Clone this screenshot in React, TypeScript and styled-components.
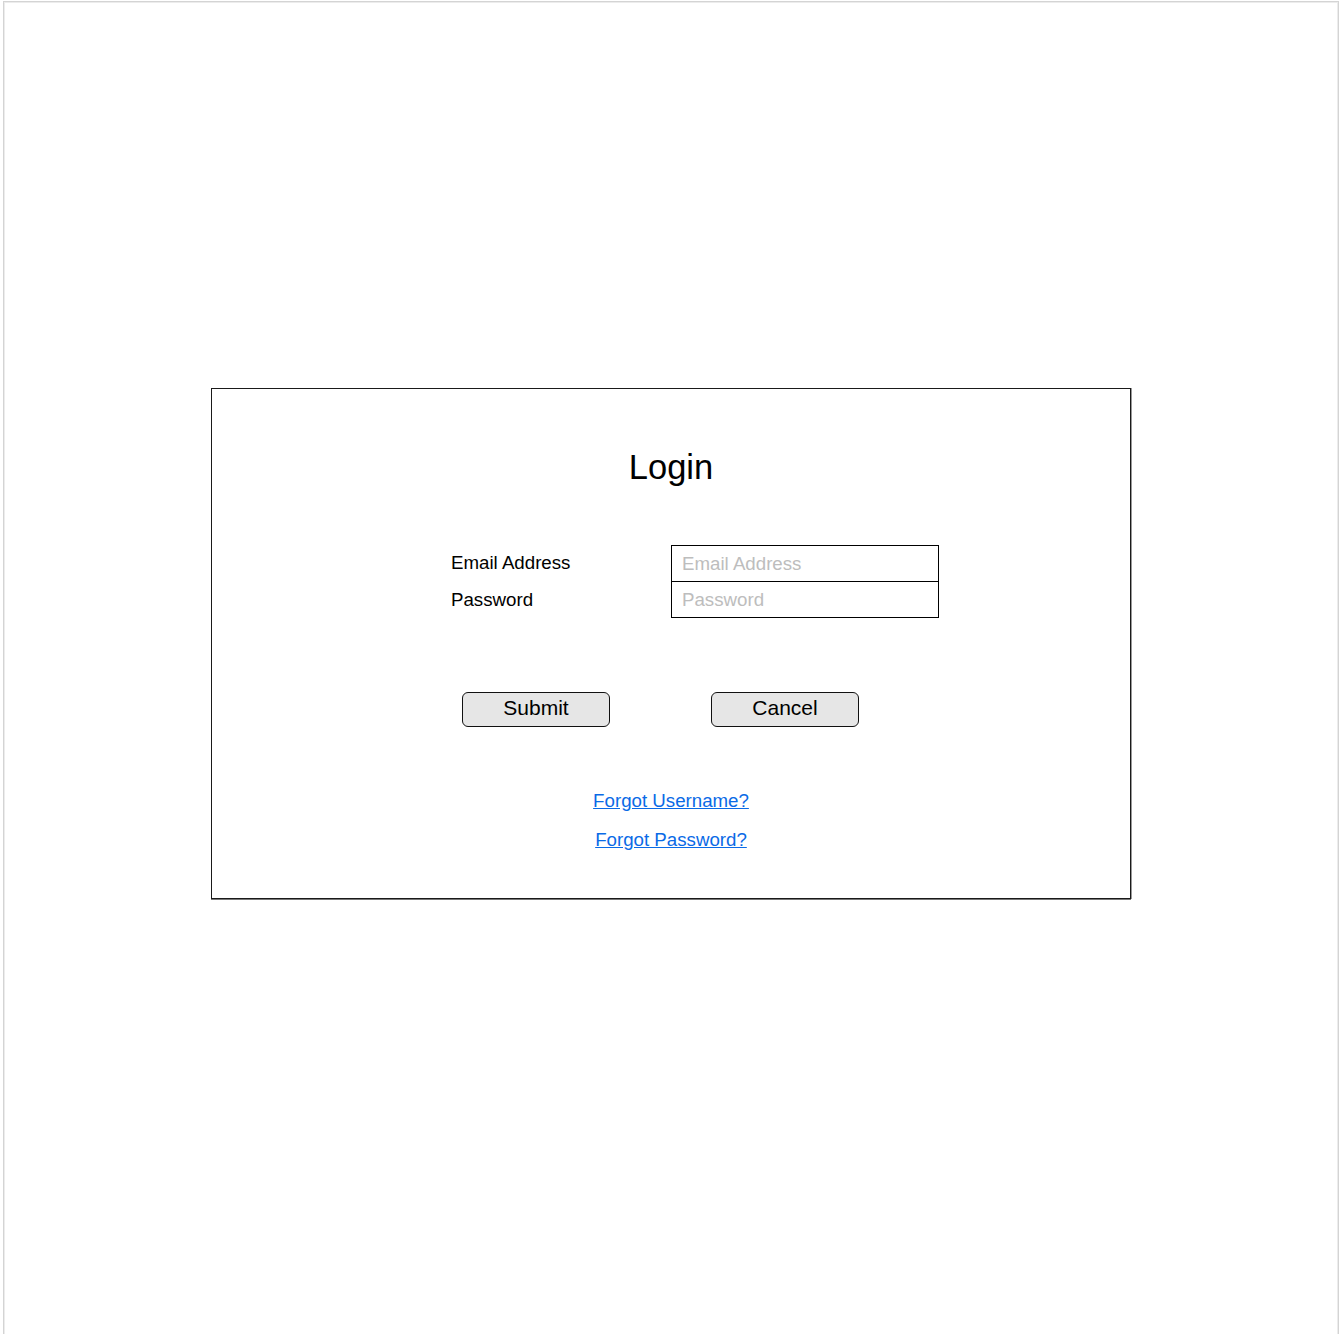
import React from "react";
import styled, { createGlobalStyle } from "styled-components";

const Global = createGlobalStyle`
  html, body { margin: 0; padding: 0; background: #ffffff; }
  body { font-family: "Liberation Sans", Arial, sans-serif; }
  * { box-sizing: border-box; }
`;

const Page = styled.div`
  margin: 1px 0 0 3px;
  width: 1336px;
  height: 1340px;
  border: 1px solid #d4d4d4;
  border-bottom: none;
  box-shadow: inset 1px 1px 0 #ececec, inset -1px 0 0 #ececec;
  padding: 386px 0 0 207px;
`;

const Card = styled.div`
  width: 920px;
  height: 511px;
  border: 1px solid #1a1a1a;
  box-shadow: 0 1px 0 #777, 1px 0 0 #999;
  display: flex;
  flex-direction: column;
  align-items: center;
  padding-top: 58px;
`;

const Title = styled.h1`
  margin: 0;
  font-size: 34.5px;
  line-height: 40px;
  font-weight: 400;
  color: #000;
`;

const Form = styled.div`
  align-self: flex-start;
  margin: 58px 0 0 239px;
  display: grid;
  grid-template-columns: 220px 268px;
`;

const Label = styled.label`
  font-size: 18.7px;
  line-height: 36px;
  height: 36px;
  color: #000;
  display: flex;
  align-items: center;
`;

const Input = styled.input<{ $first?: boolean }>`
  width: 268px;
  height: ${(p) => (p.$first ? "37px" : "36px")};
  border: 1px solid #000;
  border-top: ${(p) => (p.$first ? "1px solid #000" : "none")};
  margin: 0;
  padding: 0 0 0 10px;
  font-family: "Liberation Sans", Arial, sans-serif;
  font-size: 18.7px;
  color: #000;
  background: #fff;
  outline: none;
  &::placeholder { color: #bdbdbd; }
`;

const Buttons = styled.div`
  align-self: flex-start;
  margin: 74px 0 0 250px;
  display: flex;
  gap: 101px;
`;

const Button = styled.button`
  width: 148px;
  height: 35px;
  border: 1px solid #111;
  border-radius: 6px;
  background: #e6e6e6;
  font-family: "Liberation Sans", Arial, sans-serif;
  font-size: 21px;
  color: #000;
  padding: 0 0 4px 0;
  cursor: pointer;
`;

const Links = styled.div`
  margin-top: 63px;
  display: flex;
  flex-direction: column;
  align-items: center;
  gap: 17px;
`;

const Link = styled.a`
  font-size: 18.7px;
  line-height: 22px;
  color: #0a6ae6;
  text-decoration: underline;
`;

export default function App() {
  return (
    <>
      <Global />
      <Page>
        <Card>
          <Title>Login</Title>
          <Form>
            <Label>Email Address</Label>
            <Input $first placeholder="Email Address" />
            <Label>Password</Label>
            <Input type="password" placeholder="Password" />
          </Form>
          <Buttons>
            <Button>Submit</Button>
            <Button>Cancel</Button>
          </Buttons>
          <Links>
            <Link href="#">Forgot Username?</Link>
            <Link href="#">Forgot Password?</Link>
          </Links>
        </Card>
      </Page>
    </>
  );
}
